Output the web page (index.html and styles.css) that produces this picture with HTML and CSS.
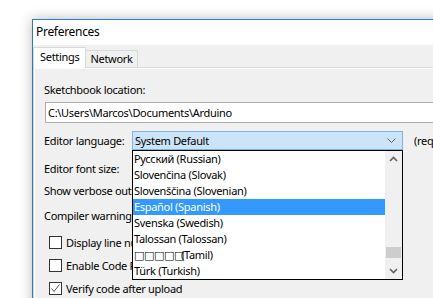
FILE: index.html
```html
<!DOCTYPE html>
<html lang="en">
<head>
    <meta charset="UTF-8">
    <title>Preferences</title>
    <link rel="stylesheet" href="styles.css">
</head>
<body>

    <!-- Preferences window -->
    <div class="window">
        <div class="titlebar">Preferences</div>

        <div class="window-body">
            <!-- Tabs -->
            <div class="tabs">
                <div class="tab active">Settings</div>
                <div class="tab">Network</div>
            </div>

            <!-- Settings panel -->
            <div class="panel">
                <div class="row row-sketch">Sketchbook location:</div>
                <div class="field">C:\Users\Marcos\Documents\Arduino</div>

                <div class="row row-lang">
                    <span class="label">Editor language:</span>
                    <div class="combo">
                        <span class="combo-value">System Default</span>
                        <svg class="combo-arrow" width="9" height="5" viewBox="0 0 9 5">
                            <polyline points="0.5,0.5 4.5,4.5 8.5,0.5" fill="none" stroke="#606060" stroke-width="1"/>
                        </svg>

                        <!-- open drop-down list -->
                        <div class="dropdown">
                            <ul class="items">
                                <li>Русский (Russian)</li>
                                <li>Slovenčina (Slovak)</li>
                                <li>Slovenščina (Slovenian)</li>
                                <li class="selected">Español (Spanish)</li>
                                <li>Svenska (Swedish)</li>
                                <li>Talossan (Talossan)</li>
                                <li><span class="tofu">□□□□□</span>(Tamil)</li>
                                <li>Türk (Turkish)</li>
                            </ul>
                            <div class="scrollbar">
                                <div class="scroll-btn">
                                    <svg width="9" height="6" viewBox="0 0 9 6">
                                        <polyline points="1,5 4.5,1.5 8,5" fill="none" stroke="#606060" stroke-width="1.6"/>
                                    </svg>
                                </div>
                                <div class="track">
                                    <div class="thumb"></div>
                                </div>
                                <div class="scroll-btn">
                                    <svg width="9" height="6" viewBox="0 0 9 6">
                                        <polyline points="1,1 4.5,4.5 8,1" fill="none" stroke="#606060" stroke-width="1.6"/>
                                    </svg>
                                </div>
                            </div>
                        </div>
                    </div>
                    <span class="note">(requires restart of Arduino)</span>
                </div>

                <div class="row row-font">Editor font size:</div>
                <div class="row row-verbose">Show verbose output during:</div>
                <div class="row row-warn">Compiler warnings:</div>

                <div class="row check-row row-c1">
                    <span class="checkbox"></span>
                    <span>Display line numbers</span>
                </div>
                <div class="row check-row row-c2">
                    <span class="checkbox"></span>
                    <span>Enable Code Folding</span>
                </div>
                <div class="row check-row row-c3">
                    <span class="checkbox">
                        <svg width="11" height="11" viewBox="0 0 11 11">
                            <polyline points="1.5,5.5 4,8.5 9.5,1.5" fill="none" stroke="#555" stroke-width="1"/>
                        </svg>
                    </span>
                    <span>Verify code after upload</span>
                </div>
            </div>
        </div>
    </div>

</body>
</html>
```

FILE: styles.css
```css
* {
    box-sizing: border-box;
    margin: 0;
    padding: 0;
}

body {
    width: 433px;
    height: 298px;
    overflow: hidden;
    background: #ffffff;
    font-family: 'Noto Sans', sans-serif;
    font-size: 11px;
    letter-spacing: -0.3px;
    color: #000;
}

/* Window frame */
.window {
    margin: 19px 0 0 32px;
    width: 460px;
    height: 320px;
    border-top: 1px solid #2b7bc4;
    border-left: 1px solid #2b7bc4;
    background: #f0f0f0;
    box-shadow: 0 0 12px rgba(0, 0, 0, 0.28);
}

.titlebar {
    height: 25px;
    background: #ffffff;
    padding: 4px 0 0 3px;
    line-height: 16px;
    font-size: 12px;
}

/* Tabs */
.tabs {
    display: flex;
    align-items: flex-end;
    height: 21px;
    margin-top: 1px;
}

.tab {
    height: 17px;
    line-height: 16px;
    padding: 0 4px;
    border: 1px solid #d9d9d9;
    border-bottom: none;
    background: #f0f0f0;
    margin-left: -1px;
}

.tab.active {
    height: 21px;
    line-height: 18px;
    padding: 0 6px;
    margin-left: 0;
    background: #ffffff;
    position: relative;
    margin-bottom: -1px;
    z-index: 1;
}

/* Panel */
.panel {
    border-top: 1px solid #d9d9d9;
    border-left: 1px solid #d9d9d9;
    box-shadow: inset 1px 1px 0 #ffffff;
    height: 260px;
    padding: 11px 0 0 10px;
}

.row {
    display: flex;
    align-items: center;
    height: 20px;
    white-space: nowrap;
}

.field {
    margin: 3px 0 0 1px;
    width: 420px;
    height: 21px;
    line-height: 19px;
    border: 1px solid #acacac;
    background: #ffffff;
    padding-left: 2px;
}

.row-lang {
    margin-top: 8px;
    height: 19px;
}

.label {
    width: 88px;
    flex-shrink: 0;
}

.combo {
    position: relative;
    flex-shrink: 0;
    width: 271px;
    height: 19px;
    display: flex;
    align-items: center;
    justify-content: space-between;
    border: 1px solid #7eb4ea;
    background: #cce4f7;
    padding: 0 6px 0 2px;
}

.note {
    margin-left: 11px;
}

/* Open list */
.dropdown {
    position: absolute;
    top: 18px;
    left: -1px;
    width: 271px;
    height: 130px;
    border: 1px solid #000;
    background: #ffffff;
    display: flex;
    z-index: 5;
}

.items {
    list-style: none;
    flex: 1;
}

.items li {
    height: 16px;
    line-height: 16px;
    padding-left: 1px;
}

.items li.selected {
    background: #3399ff;
    color: #ffffff;
}

.tofu {
    font-family: 'DejaVu Sans', sans-serif;
    font-size: 11px;
    letter-spacing: -0.4px;
    margin-right: -3px;
}

.scrollbar {
    width: 17px;
    background: #f0f0f0;
    display: flex;
    flex-direction: column;
}

.scroll-btn {
    height: 16px;
    display: flex;
    align-items: center;
    justify-content: center;
}

.track {
    flex: 1;
    padding: 80px 1px 0 1px;
}

.thumb {
    height: 11px;
    background: #cdcdcd;
}

.row-font {
    margin-top: 8px;
}

.row-verbose {
    margin-top: 2px;
}

.row-warn {
    margin-top: 5px;
}

/* Checkboxes */
.check-row {
    padding-left: 5px;
    gap: 4px;
}

.row-c1 {
    margin-top: 7px;
}

.row-c2,
.row-c3 {
    margin-top: 3px;
}

.checkbox {
    width: 13px;
    height: 13px;
    border: 1px solid #333;
    background: #ffffff;
    display: flex;
    align-items: center;
    justify-content: center;
}
```
